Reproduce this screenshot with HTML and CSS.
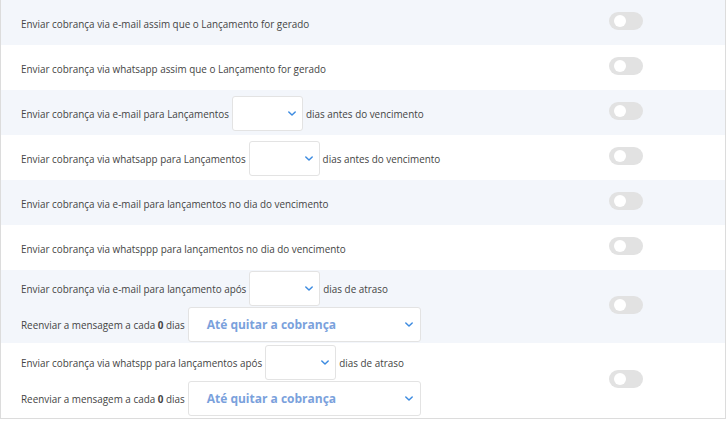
FILE: index.html
```html
<!DOCTYPE html>
<html lang="pt-BR">
<head>
<meta charset="utf-8">
<link rel="stylesheet" href="styles.css">
</head>
<body>
<div class="panel">
  <div class="row alt">
    <div class="label"><span>Enviar cobrança via e-mail assim que o Lançamento for gerado</span></div>
    <div class="toggle"><span class="knob"></span></div>
  </div>
  <div class="row">
    <div class="label"><span>Enviar cobrança via whatsapp assim que o Lançamento for gerado</span></div>
    <div class="toggle"><span class="knob"></span></div>
  </div>
  <div class="row alt">
    <div class="label"><span>Enviar cobrança via e-mail para Lançamentos</span><div class="select small"><svg class="chev" viewBox="0 0 10 6"><path d="M1 1 L5 5 L9 1"/></svg></div><span>dias antes do vencimento</span></div>
    <div class="toggle"><span class="knob"></span></div>
  </div>
  <div class="row">
    <div class="label"><span>Enviar cobrança via whatsapp para Lançamentos</span><div class="select small"><svg class="chev" viewBox="0 0 10 6"><path d="M1 1 L5 5 L9 1"/></svg></div><span>dias antes do vencimento</span></div>
    <div class="toggle"><span class="knob"></span></div>
  </div>
  <div class="row alt">
    <div class="label"><span>Enviar cobrança via e-mail para lançamentos no dia do vencimento</span></div>
    <div class="toggle"><span class="knob"></span></div>
  </div>
  <div class="row">
    <div class="label"><span>Enviar cobrança via whatsppp para lançamentos no dia do vencimento</span></div>
    <div class="toggle"><span class="knob"></span></div>
  </div>
  <div class="row alt tall">
    <div class="stack">
      <div class="label"><span>Enviar cobrança via e-mail para lançamento após</span><div class="select small"><svg class="chev" viewBox="0 0 10 6"><path d="M1 1 L5 5 L9 1"/></svg></div><span>dias de atraso</span></div>
      <div class="label"><span>Reenviar a mensagem a cada <b>0</b> dias</span><div class="select big"><span class="val">Até quitar a cobrança</span><svg class="chev" viewBox="0 0 10 6"><path d="M1 1 L5 5 L9 1"/></svg></div></div>
    </div>
    <div class="toggle"><span class="knob"></span></div>
  </div>
  <div class="row tall last">
    <div class="stack">
      <div class="label"><span>Enviar cobrança via whatspp para lançamentos após</span><div class="select small"><svg class="chev" viewBox="0 0 10 6"><path d="M1 1 L5 5 L9 1"/></svg></div><span>dias de atraso</span></div>
      <div class="label"><span>Reenviar a mensagem a cada <b>0</b> dias</span><div class="select big"><span class="val">Até quitar a cobrança</span><svg class="chev" viewBox="0 0 10 6"><path d="M1 1 L5 5 L9 1"/></svg></div></div>
    </div>
    <div class="toggle"><span class="knob"></span></div>
  </div>
</div>
</body>
</html>
```
FILE: styles.css
```css
html, body { margin: 0; padding: 0; background: #fff; }
body { font-family: "Open Sans", "Liberation Sans", sans-serif; font-size: 9.9px; color: #444; }
.panel {
  width: 724px;
  border: 1px solid #dcdcdc;
  border-top: none;
  box-sizing: content-box;
}
.row {
  display: flex;
  align-items: center;
  height: 45px;
  padding-left: 20px;
  background: #fff;
}
.row.alt { background: #f3f6fb; }
.row.tall { height: 73px; align-items: stretch; }
.row.tall.last { height: 75px; }
.row.tall .toggle { align-self: center; }
.stack {
  display: flex;
  flex-direction: column;
  justify-content: center;
  gap: 1px;
  width: 588px;
}
.label {
  width: 588px;
  display: flex;
  align-items: center;
  gap: 3px;
  padding-top: 2px;
}
.stack .label { padding-top: 0; }
.select {
  position: relative;
  height: 35px;
  box-sizing: border-box;
  border: 1px solid #e3e3e3;
  border-radius: 3px;
  background: #fff;
  display: flex;
  align-items: center;
}
.select.small { width: 71px; }
.select.big { width: 233px; }
.select .val {
  margin-left: 18px;
  font-size: 12px;
  font-weight: 700;
  color: #7aa1dc;
  flex: 1;
}
.chev {
  width: 8px;
  height: 5px;
  margin-left: auto;
  margin-right: 6px;
  fill: none;
  stroke: #3d8be0;
  stroke-width: 1.8;
  stroke-linecap: round;
  stroke-linejoin: round;
}
.big .chev { margin-right: 7px; }
.toggle {
  width: 34px;
  height: 18px;
  border-radius: 9px;
  background: #e2e2e2;
  display: flex;
  align-items: center;
  margin-top: -3px;
}
.knob {
  width: 12px;
  height: 12px;
  border-radius: 50%;
  background: #fff;
  margin-left: 5px;
}
```
